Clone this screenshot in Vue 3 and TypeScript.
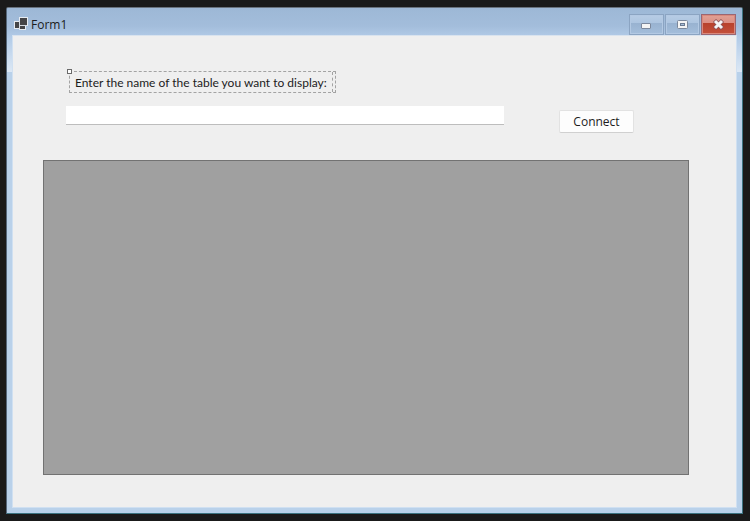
<script setup lang="ts">
import { ref } from 'vue'

const title = 'Form1'
const tableName = ref<string>('')
</script>

<template>
  <div class="desktop">
    <section class="window">
      <header class="titlebar">
        <svg class="app-icon" width="16" height="16" viewBox="0 0 16 16" aria-hidden="true">
          <path d="M5 0h9v9h-2v4H5v-1H0V4h5z" fill="#e6ebf1" />
          <path d="M6 1h7v7H6zM1 5h4v6H1zM6 9h5v3H6z" fill="#454547" />
          <path d="M5.5 4v8M6 8.5h7" stroke="#d5dbe3" />
        </svg>
        <h1 class="title">{{ title }}</h1>
        <div class="controls">
          <button class="control" type="button" aria-label="Minimize">
            <svg width="13" height="11" viewBox="0 0 13 11">
              <rect x="1.5" y="4.5" width="9" height="5" rx="0.5" fill="#f4f4f4" stroke="#7b879b" />
            </svg>
          </button>
          <button class="control" type="button" aria-label="Maximize">
            <svg width="13" height="11" viewBox="0 0 13 11">
              <rect x="1.5" y="1.5" width="10" height="8" rx="1" fill="#f4f4f4" stroke="#7b879b" />
              <rect x="4.5" y="4.5" width="4" height="2" fill="#a9bfd9" stroke="#6c7b92" />
            </svg>
          </button>
          <button class="control close" type="button" aria-label="Close">
            <svg width="13" height="11" viewBox="0 0 13 11">
              <path d="M2.5 1.5 10.5 9.5M10.5 1.5 2.5 9.5" stroke="#8b5358" stroke-width="4.4" />
              <path d="M3 2 10 9M10 2 3 9" stroke="#f5f5f5" stroke-width="3" />
            </svg>
          </button>
        </div>
      </header>

      <main class="client">
        <form class="query" @submit.prevent>
          <div class="field">
            <label class="caption" for="table-name">
              <span class="handle"></span>
              Enter the name of the table you want to display:
            </label>
            <input id="table-name" v-model="tableName" class="textbox" type="text" />
          </div>
          <button class="connect" type="submit">Connect</button>
        </form>
        <div class="data-grid"></div>
      </main>
    </section>
  </div>
</template>

<style>
body {
  margin: 0;
  background: #1a1a1a;
}
</style>

<style scoped>
.desktop {
  box-sizing: border-box;
  display: flex;
  min-height: 100vh;
  padding: 7px 7px 7px 6px;
  background: #1a1a1a;
  color: #1c1c1c;
  font: 12px/16px "Open Sans", "Noto Sans", sans-serif;
}

.window {
  flex: 1;
  display: flex;
  flex-direction: column;
  box-sizing: border-box;
  padding: 0 5px 5px;
  border: 1px solid #3c7381;
  border-top-color: #69727d;
  border-left-color: #55677a;
  border-radius: 2px 2px 0 0;
  background: linear-gradient(#9db8d6 0, #a3bddb 18px, #b3cce8 30px, #dce8f5 64px, #b9d1ea 64px);
}

.titlebar {
  display: flex;
  align-items: flex-start;
  height: 27px;
  padding: 0 1px 0 2px;
}

.app-icon {
  margin-top: 9px;
}

.title {
  flex: 1;
  margin: 9px 0 0 1px;
  font-size: 12px;
  font-weight: 400;
}

.controls {
  display: flex;
  gap: 1px;
  margin-top: 6px;
}

.control {
  display: flex;
  align-items: center;
  justify-content: center;
  box-sizing: border-box;
  width: 35px;
  height: 21px;
  padding: 0;
  border: 1px solid #8ba4c2;
  background: linear-gradient(#b7cce5 0, #adc5e0 8px, #98b2d0 8px, #a4bedb 100%);
  box-shadow: inset 0 0 0 1px #b3c9e3;
}

.close {
  border-color: #9a6672;
  background: linear-gradient(#e1a196 0, #dc8f83 8px, #b8412b 8px, #c4513c 100%);
  box-shadow: inset 0 0 0 1px #d9897c;
}

.client {
  flex: 1;
  display: flex;
  flex-direction: column;
  gap: 27px;
  padding: 35px 47px 32px 30px;
  border: 1px solid #d0e0f1;
  border-top-color: #d9e3ee;
  background: #efefef;
}

.query {
  display: flex;
  align-items: flex-end;
  gap: 55px;
  padding: 0 55px 0 23px;
}

.field {
  flex: 1;
  display: flex;
  flex-direction: column;
  align-items: flex-start;
  gap: 13px;
  padding-bottom: 8px;
}

.caption {
  position: relative;
  box-sizing: border-box;
  height: 22px;
  margin-left: 3px;
  padding: 3px 8px 0 5px;
  border: 1px dashed #a3a3a3;
  font-family: Lato, "Open Sans", sans-serif;
  white-space: nowrap;
}

.caption::after {
  content: "";
  position: absolute;
  top: 0;
  right: 2px;
  bottom: 0;
  border-right: 1px dashed #a3a3a3;
}

.handle {
  position: absolute;
  top: -3px;
  left: -3px;
  box-sizing: border-box;
  width: 5px;
  height: 5px;
  border: 1px solid #6a6a6a;
  background: #ffffff;
}

.textbox {
  box-sizing: border-box;
  width: 100%;
  height: 19px;
  padding: 0 4px;
  border: 0;
  border-bottom: 1px solid #bdbdbd;
  background: #ffffff;
  font: inherit;
  outline: none;
}

.connect {
  box-sizing: border-box;
  width: 75px;
  height: 23px;
  padding: 0;
  border: 1px solid #e2e2e2;
  border-bottom-color: #d0d0d0;
  border-radius: 2px;
  background: #fdfdfd;
  color: inherit;
  font: inherit;
}

.data-grid {
  flex: 1;
  border: 1px solid #727272;
  background: #a0a0a0;
}
</style>
